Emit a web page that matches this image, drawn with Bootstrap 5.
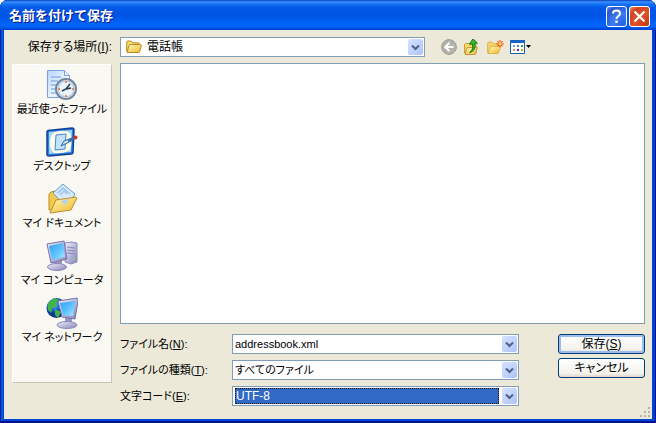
<!DOCTYPE html>
<html lang="ja">
<head>
<meta charset="utf-8">
<meta name="viewport" content="width=device-width, initial-scale=1">
<title>名前を付けて保存</title>
<link href="https://cdn.jsdelivr.net/npm/bootstrap@5.3.0/dist/css/bootstrap.min.css" rel="stylesheet">
<style>
body{font-family:"Liberation Sans","Noto Sans CJK JP",sans-serif;font-size:12px;line-height:16px;color:#000;background:#fff;font-feature-settings:"palt"}
button{font-feature-settings:inherit}
.dialog-frame{background:#0045d8;border-radius:8px 8px 0 0;padding:0 4px 4px;box-shadow:inset 1px 0 #001ea0,inset -1px 0 #001590,inset 0 -2px #00138c,inset 3px 0 #0855dd,inset -3px 0 #003dd0}
.title-strip{height:30px;margin:0 -4px;padding:2px 6px 0 9px;border-radius:8px 8px 0 0;color:#fff;background:linear-gradient(#0842c0 0,#3b91ff 2px,#1572f5 4px,#0058e6 8px,#0054e3 16px,#0062f8 23px,#0066ff 26px,#0053e2 28px,#003dd7 30px)}
.title-strip h1{font-size:13px;line-height:20px;font-weight:700;text-shadow:1px 1px #0a1883;font-feature-settings:normal}
.caps{gap:2px}
.cap-btn{width:21px;height:21px;padding:0;border:1px solid #fff;border-radius:3px;display:flex;align-items:center;justify-content:center;background:radial-gradient(circle at 85% 90%,#2463e0,#3e7cf0 45%,#2857cf 80%,#6f9df5)}
.cap-close{background:radial-gradient(circle at 85% 90%,#cb3b10,#e1522c 50%,#cf4320 75%,#ee8b6c)}
.client{background:#ece9d8;padding:7px 7px 13px 8px}
.look-row{height:20px;margin-bottom:6px}
.look-label{width:100px;text-align:right}
.tools{width:212px;padding-left:8px}
.tool{border:0;background:none;padding:0;height:20px;width:23px;display:flex;align-items:center}
.tool-views{width:26px}
.combo{border:1px solid #7f9db9;background:#fff;padding:1px;height:20px;min-width:0}
.combo select,.combo input{appearance:none;border:0;border-radius:0;background:#fff;color:#000;font:inherit;font-feature-settings:inherit;padding:0 1px;outline:0;line-height:16px;height:16px;min-width:0}
.combo .compact{font-size:11px}
.combo .picked{background:#316ac5;color:#fff;border:1px dotted #201808;line-height:14px;margin:0 3px 0 1px;padding:0}
.drop{width:15px;height:16px;flex:none;border:0;border-radius:2px;padding:0;display:flex;align-items:center;justify-content:center;background:linear-gradient(135deg,#d5e1fd,#c0d2fc 55%,#adc3f5)}
.places{width:100px;background:#f9f8f3;border:1px solid #fff;border-right-color:#c9c6b8;border-bottom-color:#c9c6b8;padding-top:4px;margin:1px 0 23px}
.place{border:0;background:none;color:inherit;padding:0;height:57px;display:flex;flex-direction:column;align-items:center;white-space:nowrap;width:100%;font-size:11px}
.place svg{width:32px;height:32px}
.files{border:1px solid #7f9db9;background:#fff;min-height:120px}
.fields{padding-top:10px;gap:39px}
.field-label{width:112px;flex:none;font-size:11px}
.field+.field{margin-top:6px}
.action{height:20px;border:1px solid #003c74;border-radius:3px;color:#000;background:linear-gradient(#fff,#f3f2ec 80%,#dcd7cb);padding:0;line-height:16px}
.action-main{box-shadow:inset 0 0 0 2px #9dbcf0}
.action-col{width:87px;gap:4px;flex:none}
.grip{right:1px;bottom:1px}
</style>
<script src="https://cdn.jsdelivr.net/npm/bootstrap@5.3.0/dist/js/bootstrap.bundle.min.js"></script>
</head>
<body>
<svg width="0" height="0" class="position-absolute" aria-hidden="true">
<defs>
<linearGradient id="fold" x1="0" y1="0" x2="1" y2="1"><stop offset="0" stop-color="#fff8b8"/><stop offset="1" stop-color="#efb92e"/></linearGradient>
<linearGradient id="paper" x1="0" y1="0" x2="1" y2="1"><stop offset="0" stop-color="#b5d5fb"/><stop offset=".6" stop-color="#eef6ff"/><stop offset="1" stop-color="#8eb6ec"/></linearGradient>
<linearGradient id="screen" x1="0" y1="0" x2="1" y2="1"><stop offset="0" stop-color="#2b9df5"/><stop offset=".6" stop-color="#66c6ff"/><stop offset="1" stop-color="#b4edff"/></linearGradient>
<linearGradient id="shell" x1="0" y1="0" x2="1" y2="1"><stop offset="0" stop-color="#f0f0fb"/><stop offset="1" stop-color="#8583ba"/></linearGradient>
<radialGradient id="globe" cx=".35" cy=".3"><stop offset="0" stop-color="#8dd0ff"/><stop offset=".5" stop-color="#2477de"/><stop offset="1" stop-color="#0a318e"/></radialGradient>
<symbol id="chev" viewBox="0 0 9 7"><path d="M1 1.5l3.5 3.5L8 1.5" fill="none" stroke="#4d6185" stroke-width="2"/></symbol>
</defs>
</svg>
<main class="dialog-frame min-vh-100 d-flex flex-column">
<header class="title-strip d-flex align-items-center">
<h1 class="m-0 flex-grow-1">名前を付けて保存</h1>
<div class="caps d-flex">
<button type="button" class="cap-btn" aria-label="ヘルプ"><svg width="15" height="17" viewBox="0 0 15 17"><path d="M4 5.5C4 1.5 11 1.5 11 5.5C11 8 7.5 8 7.5 11" fill="none" stroke="#fff" stroke-width="2"/><path d="M6.3 12.5h2.4V15H6.3z" fill="#fff"/></svg></button>
<button type="button" class="cap-btn cap-close" aria-label="閉じる"><svg width="15" height="15" viewBox="0 0 15 15"><path d="M2.500 2.500l10 10M12.500 2.500l-10 10" stroke="#fff" stroke-width="2.2"/></svg></button>
</div>
</header>
<form class="client position-relative flex-grow-1 d-flex flex-column" onsubmit="return false">
<div class="look-row d-flex align-items-center gap-2">
<label class="look-label flex-shrink-0" for="folder">保存する場所(<u>I</u>):</label>
<div class="combo d-flex flex-grow-1">
<svg class="flex-shrink-0 mx-1" width="16" height="16" viewBox="0 0 16 16"><path d="M.7 12V3.5Q.7 2 2.2 2h3l1.5 1.8H12q1.3 0 1.3 1.3V12z" fill="#f7dc75" stroke="#ba8b20"/><path d="M1 13.5L3 6.2q.2-.7 1-.7h10.5q1 0 .8.9l-1.6 6.4q-.2.7-1 .7z" fill="url(#fold)" stroke="#b98a22"/></svg>
<select id="folder" class="flex-grow-1"><option>電話帳</option></select>
<button type="button" class="drop" aria-label="場所の一覧"><svg width="9" height="7"><use href="#chev"/></svg></button>
</div>
<div class="tools d-flex align-items-center flex-shrink-0">
<button type="button" class="tool" aria-label="戻る"><svg width="16" height="16" viewBox="0 0 16 16"><circle cx="8" cy="8" r="7.4" fill="#b3b2aa" stroke="#9d9c94"/><path d="M8.5 3.7L4.3 8l4.2 4.3M4.5 8h8" stroke="#fff" stroke-width="2" fill="none"/></svg></button>
<button type="button" class="tool" aria-label="上のフォルダへ"><svg width="16" height="18" viewBox="0 0 16 18"><path d="M.6 15V6.6l1-1.2h3l1.2 1.3H12V15z" fill="#f7d66a" stroke="#c39834"/><path d="M1 16.5l2.2-7h10.2l-2.2 7z" fill="url(#fold)" stroke="#c39834"/><path d="M5.5 14.5q4-2 3-8.5H5.3L9 1l4.5 4.2H11q1 8-5.500 9.300z" fill="#3cb52c" stroke="#187c18"/></svg></button>
<button type="button" class="tool" aria-label="新しいフォルダ"><svg width="17" height="16" viewBox="0 0 17 16"><path d="M.6 13.500V4.400l1-1.300h3.200L6 4.500h5.300v9z" fill="#f7d66a" stroke="#d9b555"/><path d="M1 14.500l2.300-7.300h10.400l-2.500 7.300z" fill="url(#fold)" stroke="#dbb24e"/><path d="M13 1v7.600M9.200 4.800h7.600M10.400 2.200l5.200 5.200M15.600 2.200l-5.200 5.200" stroke="#ed6328" stroke-width="1.200"/><circle cx="13" cy="4.800" r="1.500" fill="#ffe06a"/></svg></button>
<button type="button" class="tool tool-views" aria-label="表示"><svg width="22" height="16" viewBox="0 0 22 16"><path d="M.5 1.500h14v13H.5z" fill="#fff" stroke="#1761b5"/><path d="M0 1h15v3H0z" fill="#1766c4"/><path d="M3 6h2v2H3z" fill="#7d9fd0"/><path d="M7 6h2v2H7z" fill="#497fc4"/><path d="M11 6h2v2h-2z" fill="#399d52"/><path d="M3 10h2v2H3z" fill="#e18a6b"/><path d="M7 10h2v2H7z" fill="#203da5"/><path d="M11 10h2v2h-2z" fill="#c49d28"/><path d="M16 6h5l-2.500 3z" fill="#000"/></svg></button>
</div>
</div>
<div class="d-flex gap-2 flex-grow-1">
<nav class="places flex-shrink-0" aria-label="場所">
<button type="button" class="place"><svg viewBox="0 0 32 32"><path d="M1.500 1.500h17l5 5v22h-22z" fill="url(#paper)" stroke="#7ba0dc"/><path d="M18.500 1.500v5h5" fill="#e8f3ff" stroke="#7ba0dc"/><path d="M5 8h10M5 12h7M5 16h5M5 20h5M5 24h7" stroke="#8fb4ea" stroke-width="1.500"/><circle cx="20" cy="20" r="10" fill="#e9f4fc" stroke="#71859e" stroke-width="2"/><circle cx="20" cy="20" r="8" fill="none" stroke="#b9cfdf" stroke-width="1.500"/><path d="M20 12v2M20 26v2M12 20h2M26 20h2" stroke="#e98b59" stroke-width="2"/><path d="M16 22l4-2 4-5M20 20l5-1" fill="none" stroke="#26374e" stroke-width="1.500"/></svg><span>最近使ったファイル</span></button>
<button type="button" class="place"><svg viewBox="0 0 32 32"><path d="M2 4.500L26 2q2 0 2 2l-1 22q0 2-2 2L3 30q-2 0-2-2V6q0-1 1-1.500z" fill="#2a7fe0" stroke="#123f98" stroke-width="1.500"/><path d="M3 6l23-2-1 22-22 2z" fill="#9fd6fb"/><path d="M9 6q10-3 15 1 3 8 0 17-7 4-16 3-5-4-4-12 1-7 5-9z" fill="#fbfae2"/><path d="M10 9l10-1-1 15-10 1z" fill="#c3e2fb" stroke="#4687cf"/><path d="M15 20l3-5 8-3 1 2-8 4z" fill="#d9ecff" stroke="#29649f"/><path d="M22 15l7-3" stroke="#356fa8" stroke-width="2"/><circle cx="29.500" cy="11.500" r="2" fill="#c93a22"/></svg><span>デスクトップ</span></button>
<button type="button" class="place"><svg viewBox="0 0 32 32"><path d="M3 27V12q0-2 2-3l4-1 3 3 8-2v16z" fill="#f4c94c" stroke="#b98c25"/><path d="M7 10L17 1l12 10-8 14z" fill="#d7eafd" stroke="#699bd0"/><path d="M12 10l5-5 7 6M14 12l4-4 3 3" fill="none" stroke="#9cc4ed" stroke-width="1.500"/><path d="M4 30l6-13 20-3q1 0 .5 2L25 27z" fill="url(#fold)" stroke="#bc8e2d"/><path d="M15 18l8-2-4 6z" fill="#abd5f5"/></svg><span>マイ ドキュメント</span></button>
<button type="button" class="place"><svg viewBox="0 0 32 32"><path d="M19 3l6-1 6 1v19l-6 2-6-2z" fill="url(#shell)" stroke="#8d8bbd"/><path d="M21 7l8 1M21 10l8 1M21 13l8 1" stroke="#8a88bb"/><circle cx="28" cy="19" r="1" fill="#79de60"/><path d="M8 20h8v7H8z" fill="#9a98c6"/><ellipse cx="11" cy="27" rx="9.500" ry="3.500" fill="url(#shell)" stroke="#8b88b8"/><path d="M1 4l17-3 3 18-16 4z" fill="url(#shell)" stroke="#7674aa"/><path d="M3 6l14-3 2 14-13 3z" fill="url(#screen)"/></svg><span>マイ コンピュータ</span></button>
<button type="button" class="place"><svg viewBox="0 0 32 32"><circle cx="10.500" cy="11" r="10" fill="url(#globe)"/><path d="M2 6l6-5 5 2-3 3 1 3-5 2-1 5-3-3zM9 12l6 3-3 6-3-3z" fill="#43b548"/><path d="M19 20h7v8h-7z" fill="#9a98c6"/><ellipse cx="21" cy="28" rx="10" ry="3.500" fill="url(#shell)" stroke="#8b88b8"/><path d="M12 4l19-3 1 3-3 18-13-2z" fill="url(#shell)" stroke="#7674aa"/><path d="M14 6l15-2-2 15-10-1z" fill="url(#screen)"/></svg><span>マイ ネットワーク</span></button>
</nav>
<div class="flex-grow-1 d-flex flex-column">
<section class="files flex-grow-1" aria-label="ファイルの一覧"></section>
<div class="fields d-flex">
<div class="flex-grow-1">
<div class="field d-flex align-items-center"><label class="field-label" for="fname">ファイル名(<u>N</u>):</label><div class="combo d-flex flex-grow-1"><input id="fname" class="compact flex-grow-1" value="addressbook.xml"><button type="button" class="drop" aria-label="ファイル名の履歴"><svg width="9" height="7"><use href="#chev"/></svg></button></div></div>
<div class="field d-flex align-items-center"><label class="field-label" for="ftype">ファイルの種類(<u>T</u>):</label><div class="combo d-flex flex-grow-1"><select id="ftype" class="compact flex-grow-1"><option>すべてのファイル</option></select><button type="button" class="drop" aria-label="種類の一覧"><svg width="9" height="7"><use href="#chev"/></svg></button></div></div>
<div class="field d-flex align-items-center"><label class="field-label" for="enc">文字コード(<u>E</u>):</label><div class="combo d-flex flex-grow-1"><select id="enc" class="picked flex-grow-1"><option>UTF-8</option></select><button type="button" class="drop" aria-label="文字コードの一覧"><svg width="9" height="7"><use href="#chev"/></svg></button></div></div>
</div>
<div class="action-col d-flex flex-column"><button type="submit" class="action action-main">保存(<u>S</u>)</button><button type="button" class="action">キャンセル</button></div>
</div>
</div>
</div>
<svg class="grip position-absolute" width="11" height="11" viewBox="0 0 11 11" aria-hidden="true"><path d="M8 0h2v2H8zM4 4h2v2H4zM8 4h2v2H8zM0 8h2v2H0zM4 8h2v2H4zM8 8h2v2H8z" fill="#b8b4a3"/></svg>
</form>
</main>
</body>
</html>
